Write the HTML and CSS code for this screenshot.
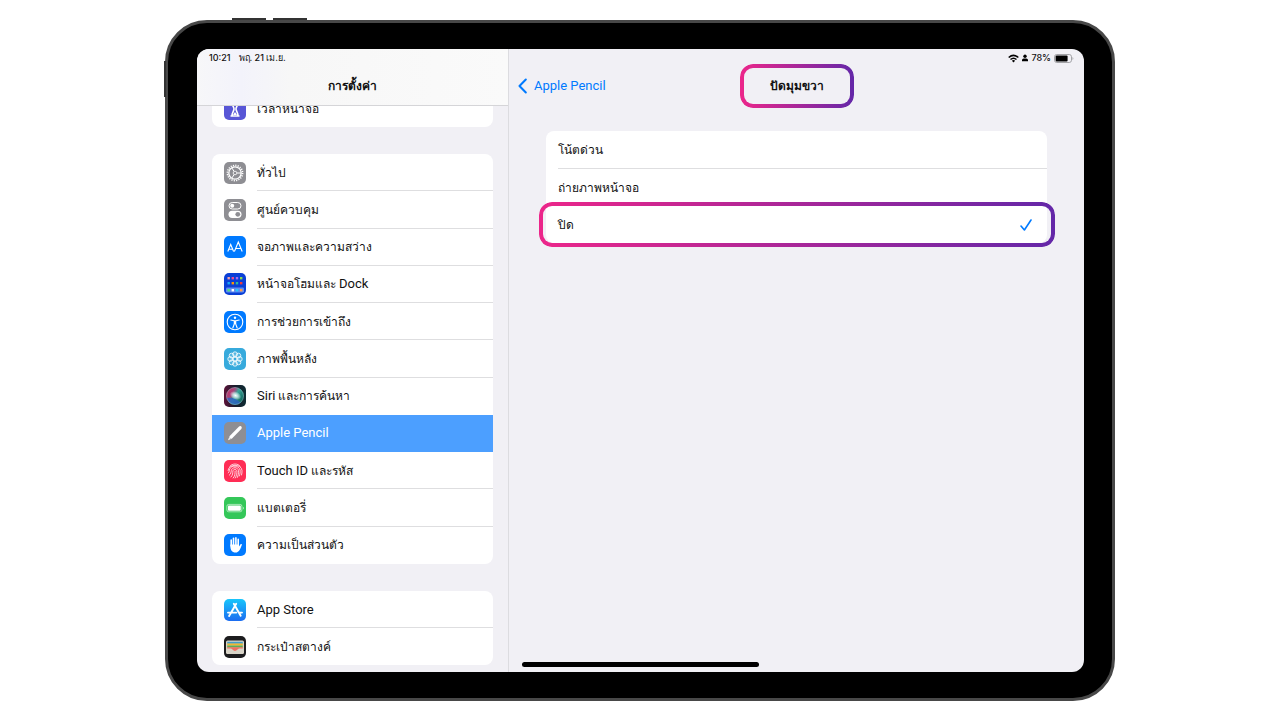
FILE: index.html
```html
<!DOCTYPE html>
<html lang="th">
<head>
  <meta charset="utf-8">
  <meta name="viewport" content="width=device-width, initial-scale=1">
  <title>การตั้งค่า</title>
  <link rel="stylesheet" href="styles.css">
</head>
<body>
  <div class="device">
    <span class="key key-top"></span>
    <span class="key key-volume"></span>
    <span class="key key-side"></span>

    <div class="screen">
      <aside class="sidebar">
        <header class="sidebar-header">
          <div class="status"><span>10:21</span><span>พฤ. 21 เม.ย.</span></div>
          <h1 class="title">การตั้งค่า</h1>
        </header>

        <nav class="menu">
          <div class="group group-first">
            <a class="item" href="#">
              <svg class="icon" viewBox="0 0 22 22"><rect width="22" height="22" rx="5" fill="#5856d6"/><path d="M6.500 4h9M6.500 18h9M8 4c0 4 2 5 2 7s-2 3-2 7M14 4c0 4-2 5-2 7s2 3 2 7" fill="none" stroke="#fff" stroke-width="1.600"/><path d="M9 17l2-3 2 3z" fill="#fff"/></svg>
              <span class="label">เวลาหน้าจอ</span>
            </a>
          </div>

          <div class="group group-main">
            <a class="item" href="#">
              <svg class="icon" viewBox="0 0 22 22"><rect width="22" height="22" rx="5" fill="#8e8e93"/><circle cx="11" cy="11" r="7.600" fill="none" stroke="#fff" stroke-width="1.600" stroke-dasharray="1.200 1.190"/><g fill="none" stroke="#fff"><circle cx="11" cy="11" r="6.200" stroke-width="1.300"/><circle cx="11" cy="11" r="1.800" stroke-width=".8"/><path d="M13 11h4M10 9.300L7.800 5.800M10 12.700l-2.200 3.500"/></g></svg>
              <span class="label">ทั่วไป</span>
            </a>
            <a class="item" href="#">
              <svg class="icon" viewBox="0 0 22 22"><rect width="22" height="22" rx="5" fill="#8e8e93"/><rect x="5" y="3.500" width="12" height="6.500" rx="3.250" fill="none" stroke="#fff"/><circle cx="8.200" cy="6.750" r="2" fill="#fff"/><rect x="4.500" y="11.700" width="13" height="7.300" rx="3.650" fill="#fff"/><circle cx="13.800" cy="15.350" r="2.400" fill="#8e8e93"/></svg>
              <span class="label">ศูนย์ควบคุม</span>
            </a>
            <a class="item" href="#">
              <svg class="icon" viewBox="0 0 22 22"><rect width="22" height="22" rx="5" fill="#007aff"/><g fill="none" stroke="#fff" stroke-width="1.100"><path d="M3.800 15.500L6.700 8.500l2.900 7M4.800 13.300h3.800M10.400 15.500l3.900-9.500 3.900 9.500M11.800 12.500h5"/></g></svg>
              <span class="label">จอภาพและความสว่าง</span>
            </a>
            <a class="item" href="#">
              <svg class="icon" viewBox="0 0 22 22"><rect width="22" height="22" rx="5" fill="#0a3fd6"/><rect x="2" y="14.600" width="18" height="5" rx="1.300" fill="#5f8cf0"/><g><path fill="#f0a1ac" d="M3.500 4h2.400v2.400H3.500z"/><path fill="#f04d8b" d="M7.600 4H10v2.400H7.600z"/><path fill="#a56bf0" d="M11.800 4h2.400v2.400h-2.400z"/><path fill="#8bd94e" d="M16 4h2.400v2.400H16z"/><path fill="#18a7f5" d="M3.500 9h2.400v2.400H3.500z"/><path fill="#ff9500" d="M7.600 9H10v2.400H7.600z"/><path fill="#27bd9b" d="M11.800 9h2.400v2.400h-2.400z"/><path fill="#f23b3b" d="M16 9h2.400v2.400H16z"/><path fill="#4ee077" d="M3.500 16h2.400v2.400H3.500z"/><path fill="#fff" d="M7.600 16H10v2.400H7.600z"/><path fill="#25c8ff" d="M11.800 16h2.400v2.400h-2.400z"/><path fill="#ff9a45" d="M16 16h2.400v2.400H16z"/></g></svg>
              <span class="label">หน้าจอโฮมและ&nbsp;<span class="latin" lang="en">Dock</span></span>
            </a>
            <a class="item" href="#">
              <svg class="icon" viewBox="0 0 22 22"><rect width="22" height="22" rx="5" fill="#007aff"/><circle cx="11" cy="11" r="7.800" fill="none" stroke="#fff" stroke-width="1.100"/><circle cx="11" cy="6.800" r="1.200" fill="#fff"/><path d="M6.800 9l3.200.7h2l3.200-.7M11 9.700v3M10.300 10v3l-1.500 4M11.700 10v3l1.500 4" fill="none" stroke="#fff" stroke-width="1.100" stroke-linecap="round"/></svg>
              <span class="label">การช่วยการเข้าถึง</span>
            </a>
            <a class="item" href="#">
              <svg class="icon" viewBox="0 0 22 22"><rect width="22" height="22" rx="5" fill="#37aadc"/><g fill="#fff" fill-opacity=".15" stroke="#fff" stroke-width=".8"><circle cx="11" cy="6.200" r="2.400"/><circle cx="14.400" cy="7.600" r="2.400"/><circle cx="15.800" cy="11" r="2.400"/><circle cx="14.400" cy="14.400" r="2.400"/><circle cx="11" cy="15.800" r="2.400"/><circle cx="7.600" cy="14.400" r="2.400"/><circle cx="6.200" cy="11" r="2.400"/><circle cx="7.600" cy="7.600" r="2.400"/></g><circle cx="11" cy="11" r="2" fill="none" stroke="#fff"/></svg>
              <span class="label">ภาพพื้นหลัง</span>
            </a>
            <a class="item before-active" href="#">
              <svg class="icon" viewBox="0 0 22 22"><defs><linearGradient id="siri" x1="0" y1="0" x2="1" y2=".6"><stop offset="0" stop-color="#d2265c"/><stop offset=".4" stop-color="#a5477c"/><stop offset=".6" stop-color="#3aa69a"/><stop offset="1" stop-color="#12695f"/></linearGradient><radialGradient id="glow"><stop offset="0" stop-color="#fff"/><stop offset=".4" stop-color="#d9f2f2" stop-opacity=".8"/><stop offset="1" stop-color="#fff" stop-opacity="0"/></radialGradient><linearGradient id="siriback"><stop stop-color="#5c1238"/><stop offset=".5" stop-color="#181c2c"/><stop offset="1" stop-color="#0d2c33"/></linearGradient></defs><rect width="22" height="22" rx="5" fill="url(#siriback)"/><circle cx="11" cy="11" r="8.800" fill="url(#siri)"/><path d="M2.800 13c5-1 9 0 14 4.500-4 4-12 2.500-14-4.500z" fill="#2c62c4" fill-opacity=".8"/><circle cx="11" cy="11" r="8.500" fill="none" stroke="#8ec1c7" stroke-width=".5"/><ellipse cx="11.500" cy="10.500" rx="6" ry="4" fill="url(#glow)" transform="rotate(25 11.500 10.500)"/></svg>
              <span class="label"><span class="latin" lang="en">Siri</span>&nbsp;และการค้นหา</span>
            </a>
            <a class="item active" href="#" aria-current="page">
              <svg class="icon" viewBox="0 0 22 22"><rect width="22" height="22" rx="5" fill="#8e8e93"/><path d="M14.800 4.700c1.800-1.600 4 .4 2.500 2.200L8 16.400l-4 1.900L5.700 14z" fill="#fff"/><path d="M5.100 15.400l1.500 1.500" stroke="#8e8e93" stroke-width=".6"/></svg>
              <span class="label"><span class="latin" lang="en">Apple Pencil</span></span>
            </a>
            <a class="item" href="#">
              <svg class="icon" viewBox="0 0 22 22"><rect width="22" height="22" rx="5" fill="#ff2d55"/><g fill="none" stroke="#fff" stroke-width=".75" stroke-linecap="round"><path d="M5.800 6.200C8.500 3.200 13.500 3.200 16.200 6.200M4 10.500c.5-7 13.500-7 14 0 0 2 0 3-.5 4.500M4.200 13c1.500-1 .8-2.500 1.500-4C7.500 5 14.700 5 16.100 10c.2 2 0 4-.8 6M5.300 15.200c2-1.300 1.600-3 2-4.700 1-4 6.500-3.500 7.200 0 .3 2.500-.3 4.800-1.200 7M7 17c2-2 1.700-4 1.900-6 .6-2.300 3.500-2 4 0 .3 2.500-.6 5-1.700 7M9.200 18c1.800-2 1.900-4 1.900-7"/></g></svg>
              <span class="label"><span class="latin" lang="en">Touch ID</span>&nbsp;และรหัส</span>
            </a>
            <a class="item" href="#">
              <svg class="icon" viewBox="0 0 22 22"><rect width="22" height="22" rx="5" fill="#34c759"/><rect x="2.900" y="7.400" width="15" height="7.400" rx="1.800" fill="none" stroke="#fff" stroke-opacity=".7" stroke-width=".8"/><rect x="4" y="8.500" width="12.800" height="5.200" rx=".9" fill="#fff"/><path d="M19 9.800q1.500 1.300 0 2.600z" fill="#fff"/></svg>
              <span class="label">แบตเตอรี่</span>
            </a>
            <a class="item" href="#">
              <svg class="icon" viewBox="0 0 22 22"><rect width="22" height="22" rx="5" fill="#007aff"/><path d="M7.200 12V6M9.500 11V4.200M11.900 11V3.900M14.200 12V5.400" stroke="#fff" stroke-width="1.600" stroke-linecap="round"/><path d="M6.400 10.500H15v2l1.400-2c.6-.9 1.800-.5 1.400.5-1.200 3-2.400 7.600-6.300 7.600-3.500 0-5.100-2.600-5.100-6z" fill="#fff"/></svg>
              <span class="label">ความเป็นส่วนตัว</span>
            </a>
          </div>

          <div class="group group-apps">
            <a class="item" href="#">
              <svg class="icon" viewBox="0 0 22 22"><defs><linearGradient id="store" x2="0" y2="1"><stop stop-color="#19c6fb"/><stop offset="1" stop-color="#1b6cf0"/></linearGradient></defs><rect width="22" height="22" rx="5" fill="url(#store)"/><path d="M9.800 4.800l6.900 12M12.200 4.800L6.300 14.900M5.700 16l-.6 1M4 13.600h8.300M15 13.600h3" stroke="#fff" stroke-width="1.900" stroke-linecap="round"/></svg>
              <span class="label"><span class="latin" lang="en">App Store</span></span>
            </a>
            <a class="item" href="#">
              <svg class="icon" viewBox="0 0 22 22"><rect width="22" height="22" rx="5" fill="#1c1c1e"/><rect x="2" y="4.500" width="18" height="13.500" rx="1.500" fill="#d8d4c8"/><path fill="#419dc9" d="M3.200 5.700h15.600v2H3.200z"/><path fill="#f0b72f" d="M3.200 7.600h15.600v2H3.200z"/><path fill="#5fac55" d="M3.200 9.400h15.600v2H3.200z"/><path fill="#ee7061" d="M3.200 11.200h15.600v1.300H15c-1.400 0-2 2.500-4 2.500s-2.600-2.500-4-2.500H3.200z"/></svg>
              <span class="label">กระเป๋าสตางค์</span>
            </a>
          </div>
        </nav>
      </aside>

      <main class="detail">
        <div class="status status-right">
          <svg class="wifi" viewBox="0 0 11 9"><g fill="none" stroke="#000" stroke-width="1.500"><path d="M.7 3.500q4.800-4.300 9.600 0M2.500 5.500q3-2.600 6 0"/></g><path d="M3.900 6.700q1.600-1.200 3.200 0L5.500 8.400z"/></svg>
          <svg class="person" viewBox="0 0 6 8"><circle cx="3" cy="2.200" r="1.700"/><path d="M0 7.300V6q0-1.500 1.700-1.500h2.600Q6 4.500 6 6v1.300z"/></svg>
          <span>78%</span>
          <svg class="battery" viewBox="0 0 20 9"><rect x=".5" y=".5" width="17" height="8" rx="2.300" fill="none" stroke="#a2a2a6"/><rect x="1.600" y="1.600" width="12" height="5.800" rx="1"/><path d="M18.500 3q1.800 1.500 0 3z" fill="#a2a2a6"/></svg>
        </div>
        <header class="detail-header">
          <a class="back latin" href="#" lang="en">
            <svg class="chevron" viewBox="0 0 9 16"><path d="M7.800 1.500L1.500 8l6.300 6.500" fill="none" stroke="#007aff" stroke-width="2" stroke-linecap="round" stroke-linejoin="round"/></svg>
            Apple Pencil
          </a>
          <h2 class="title marked">ปัดมุมขวา</h2>
        </header>

        <form class="options">
          <label class="option"><input type="radio" name="swipe">โน้ตด่วน</label>
          <label class="option"><input type="radio" name="swipe">ถ่ายภาพหน้าจอ</label>
          <label class="option marked">
            <input type="radio" name="swipe" checked>ปิด
            <svg class="check" viewBox="0 0 12 12"><path d="M1 7l3.400 4L11 1" fill="none" stroke="#007aff" stroke-width="1.600" stroke-linecap="round" stroke-linejoin="round"/></svg>
          </label>
        </form>
      </main>
      <span class="home-bar"></span>
    </div>
  </div>
</body>
</html>
```
FILE: styles.css
```css
* {
  box-sizing: border-box;
}

body {
  margin: 0;
  padding: 20px 8px 19px;
  min-height: 100vh;
  display: flex;
  justify-content: center;
  background: #fff;
  color: #111;
  font-family: Roboto, sans-serif;
  font-size: 12px;
  line-height: 20px;
}

a {
  color: inherit;
  text-decoration: none;
}

svg {
  display: block;
  flex: none;
}

.latin {
  font-size: 13px;
}

/* tablet body */
.device {
  position: relative;
  display: flex;
  width: 100%;
  max-width: 950px;
  padding: 26px 28px 26px 29px;
  border: 3px solid #484848;
  border-radius: 42px;
  background: #000;
}

.key {
  position: absolute;
  background: #333;
}

.key-top,
.key-volume {
  top: -5px;
  width: 34px;
  height: 2px;
}

.key-top {
  left: 64px;
}

.key-volume {
  left: 105px;
}

.key-side {
  top: 38px;
  left: -4px;
  width: 2px;
  height: 36px;
}

.screen {
  position: relative;
  flex: 1;
  display: flex;
  overflow: hidden;
  border-radius: 12px;
  background: #f1f0f5;
}

/* left column */
.sidebar {
  width: 312px;
  flex: none;
  display: flex;
  flex-direction: column;
  border-right: 1px solid #dcdce0;
}

.sidebar-header {
  position: relative;
  z-index: 1;
  height: 57px;
  border-bottom: 1px solid #d5d5d8;
  background: linear-gradient(90deg, #f7f7f9, #f3f3fb 14%, #f7f7f7 30%, #fafafa);
}

.status {
  display: flex;
  align-items: center;
  gap: 8px;
  height: 18px;
  padding: 0 12px;
  font-family: Inter, sans-serif;
  font-size: 9px;
  font-weight: 500;
  line-height: 18px;
}

.title {
  margin: 0;
  font-size: 12px;
  font-weight: 600;
  text-align: center;
}

.sidebar .title {
  padding-top: 9px;
}

.menu {
  padding: 0 15px;
}

.group,
.options {
  display: flex;
  flex-direction: column;
  border-radius: 8px;
  background: #fff;
}

.group {
  margin-bottom: 27px;
}

.group-first {
  height: 37px;
  margin-top: -16px;
}

.group-main {
  height: 410px;
}

.group-apps {
  height: 74px;
  margin-bottom: 0;
}

.item {
  flex: 1;
  display: flex;
  align-items: center;
  gap: 11px;
  padding-left: 12px;
}

.icon {
  width: 22px;
  height: 22px;
}

.label {
  flex: 1;
  align-self: stretch;
  display: flex;
  align-items: center;
  padding-top: 1px;
  border-bottom: 1px solid #dedee0;
}

.item:last-child .label,
.before-active .label,
.active .label {
  border-bottom-color: transparent;
}

.active {
  background: #4c9fff;
  color: #fff;
}

/* right column */
.detail {
  flex: 1;
}

.status-right {
  justify-content: flex-end;
  gap: 3px;
  padding-right: 10px;
}

.wifi {
  width: 11px;
  height: 9px;
}

.person {
  width: 6px;
  height: 8px;
}

.battery {
  width: 20px;
  height: 9px;
}

.detail-header {
  display: grid;
  grid-template-columns: 1fr auto 1fr;
  grid-template-rows: 38px;
  align-items: center;
}

.back {
  display: flex;
  align-items: center;
  gap: 7px;
  padding-left: 9px;
  color: #007aff;
}

.chevron {
  width: 9px;
  height: 16px;
}

.detail .title {
  padding: 12px 30px;
}

.options {
  height: 112px;
  margin: 26px 37px 0;
}

.option {
  flex: 1;
  display: flex;
  align-items: center;
  margin-left: 12px;
}

.option:first-child {
  border-bottom: 1px solid #dedee0;
}

.option input {
  position: absolute;
  opacity: 0;
  pointer-events: none;
}

.check {
  width: 12px;
  height: 12px;
  margin-left: auto;
  margin-right: 15px;
}

/* gradient outline round the things to look at */
.marked {
  position: relative;
}

.marked::after {
  content: "";
  position: absolute;
  inset: 0;
  padding: 4px;
  border-radius: 13px;
  background: linear-gradient(90deg, #ec268a, #6427a8);
  -webkit-mask: linear-gradient(#000 0 0) content-box, linear-gradient(#000 0 0);
  -webkit-mask-composite: xor;
  mask: linear-gradient(#000 0 0) content-box exclude, linear-gradient(#000 0 0);
}

.option.marked::after {
  inset: -4px -8px -4px -19px;
}

.home-bar {
  position: absolute;
  left: 325px;
  bottom: 5px;
  width: 237px;
  height: 5px;
  border-radius: 3px;
  background: #000;
}
```
